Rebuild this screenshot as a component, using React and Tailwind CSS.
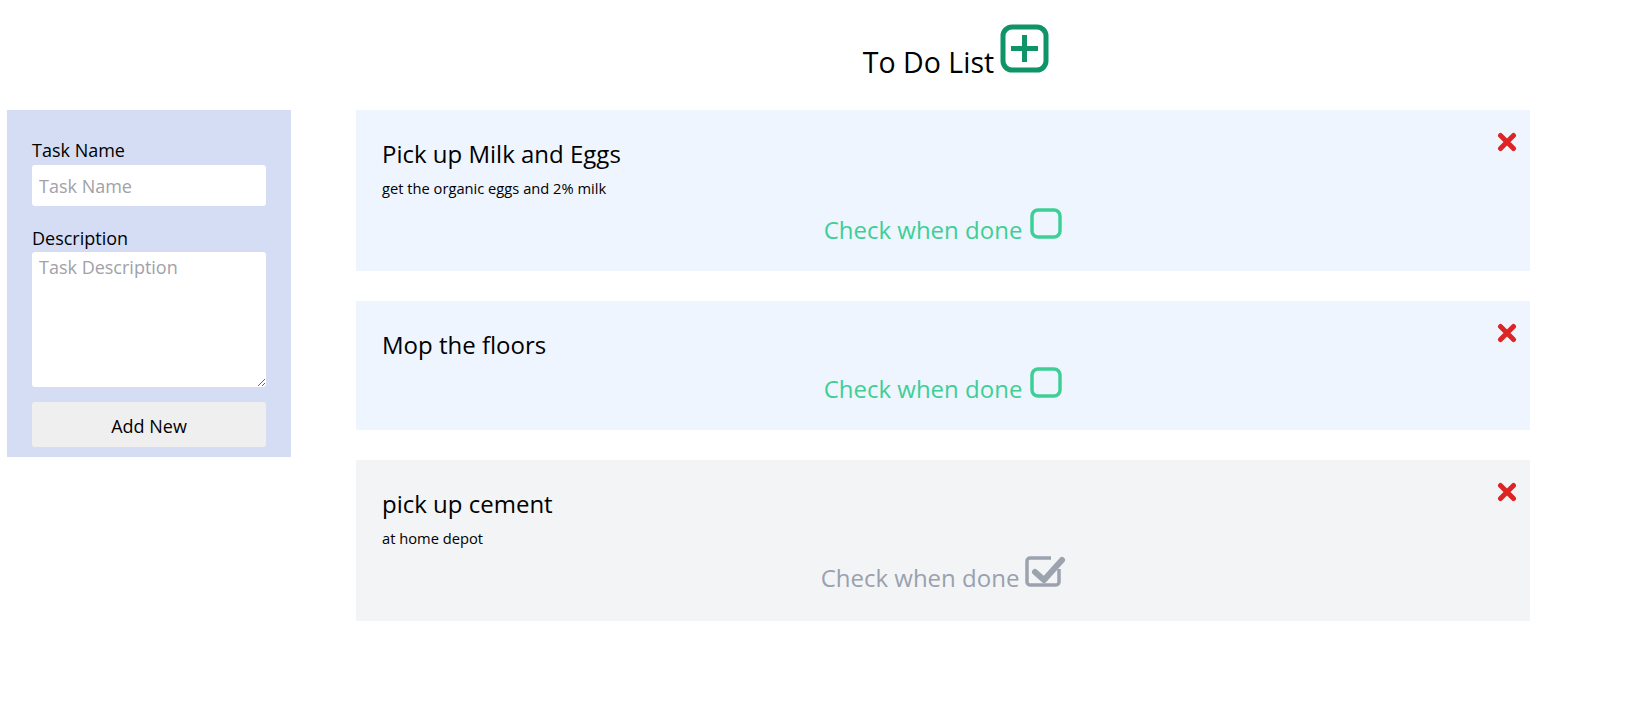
import { useState } from "react";

const font = { fontFamily: '"Open Sans", "Noto Sans", sans-serif' };

function PlusSquare() {
  return (
    <svg width="49" height="49" viewBox="0 0 49 49" className="inline-block align-baseline ml-[6px]">
      <rect x="3" y="3" width="43" height="43" rx="9" fill="none" stroke="#0f9468" strokeWidth="5" />
      <path d="M24.5 11v27M11 24.5h27" stroke="#0f9468" strokeWidth="5" />
    </svg>
  );
}

function BoxIcon({ checked }) {
  if (checked) {
    return (
      <svg width="40" height="32" viewBox="0 0 40 32" className="ml-[6px] -mt-[3px] shrink-0 overflow-visible">
        <path d="M34 14v13a3 3 0 0 1-3 3H5a3 3 0 0 1-3-3V6a3 3 0 0 1 3-3h21" fill="none" stroke="#9ca3af" strokeWidth="3.5" />
        <path d="M10 17l9 8L37 5" fill="none" stroke="#9ca3af" strokeWidth="6" strokeLinecap="round" strokeLinejoin="round" />
      </svg>
    );
  }
  return (
    <svg width="32" height="31" viewBox="0 0 32 31" className="ml-[8px] shrink-0">
      <rect x="2" y="2" width="28" height="27" rx="6" fill="none" stroke="#3ecf95" strokeWidth="3.5" />
    </svg>
  );
}

function TimesIcon() {
  return (
    <svg width="20" height="20" viewBox="0 0 20 20">
      <path d="M3.5 3.5l13 13M16.5 3.5l-13 13" stroke="#dc2626" strokeWidth="5" strokeLinecap="round" />
    </svg>
  );
}

function TaskCard({ task, onToggle }) {
  return (
    <div className={`relative px-[26px] pt-[26px] pb-[27px] ${task.done ? "bg-gray-100" : "bg-[#eef5ff]"}`}>
      <button className="absolute right-[13px] top-[22px]">
        <TimesIcon />
      </button>
      <div className="text-[24px] leading-[36px] text-black">{task.name}</div>
      {task.description && (
        <div className="text-[14.7px] leading-[21px] mt-[6px] mb-[9px] text-black">{task.description}</div>
      )}
      <div
        className={`mt-[4px] h-[36px] flex justify-center items-baseline text-[24px] leading-[36px] cursor-pointer ${task.done ? "text-gray-400" : "text-[#3ecf95]"}`}
        onClick={onToggle}
      >
        <span>Check when done</span>
        <BoxIcon checked={task.done} />
      </div>
    </div>
  );
}

export default function App() {
  const [tasks, setTasks] = useState([
    { id: 1, name: "Pick up Milk and Eggs", description: "get the organic eggs and 2% milk", done: false },
    { id: 2, name: "Mop the floors", description: "", done: false },
    { id: 3, name: "pick up cement", description: "at home depot", done: true },
  ]);

  const toggle = (id) =>
    setTasks(tasks.map((t) => (t.id === id ? { ...t, done: !t.done } : t)));

  return (
    <div className="min-h-screen bg-white flex pl-[7px]" style={font}>
      {/* Form */}
      <aside className="w-[284px] h-[347px] mt-[110px] bg-[#d4ddf4] px-[25px] pt-[27px]">
        <label className="block mb-[2px] text-[18px] leading-[26px] text-black">Task Name</label>
        <input
          className="block w-full h-[41px] bg-white rounded-[3px] px-[7px] text-[18px] placeholder:text-[#a1a1aa] outline-none"
          placeholder="Task Name"
        />
        <label className="block mt-[19px] mb-[1px] text-[18px] leading-[26px] text-black">Description</label>
        <textarea
          className="block w-full h-[135px] bg-white rounded-[3px] px-[7px] py-[2px] text-[18px] placeholder:text-[#a1a1aa] outline-none"
          placeholder="Task Description"
        />
        <button className="block w-full h-[45px] mt-[15px] pt-[4px] bg-[#efefef] rounded-[3px] text-[18px] text-black">
          Add New
        </button>
      </aside>

      {/* List */}
      <main className="ml-[65px] w-[1174px]">
        <header className="h-[110px] pt-[24px] pl-[26px] text-center">
          <h1 className="text-[28.5px] leading-[52px] text-black">
            To Do List
            <PlusSquare />
          </h1>
        </header>
        <div className="flex flex-col gap-[30px]">
          {tasks.map((t) => (
            <TaskCard key={t.id} task={t} onToggle={() => toggle(t.id)} />
          ))}
        </div>
      </main>
    </div>
  );
}
